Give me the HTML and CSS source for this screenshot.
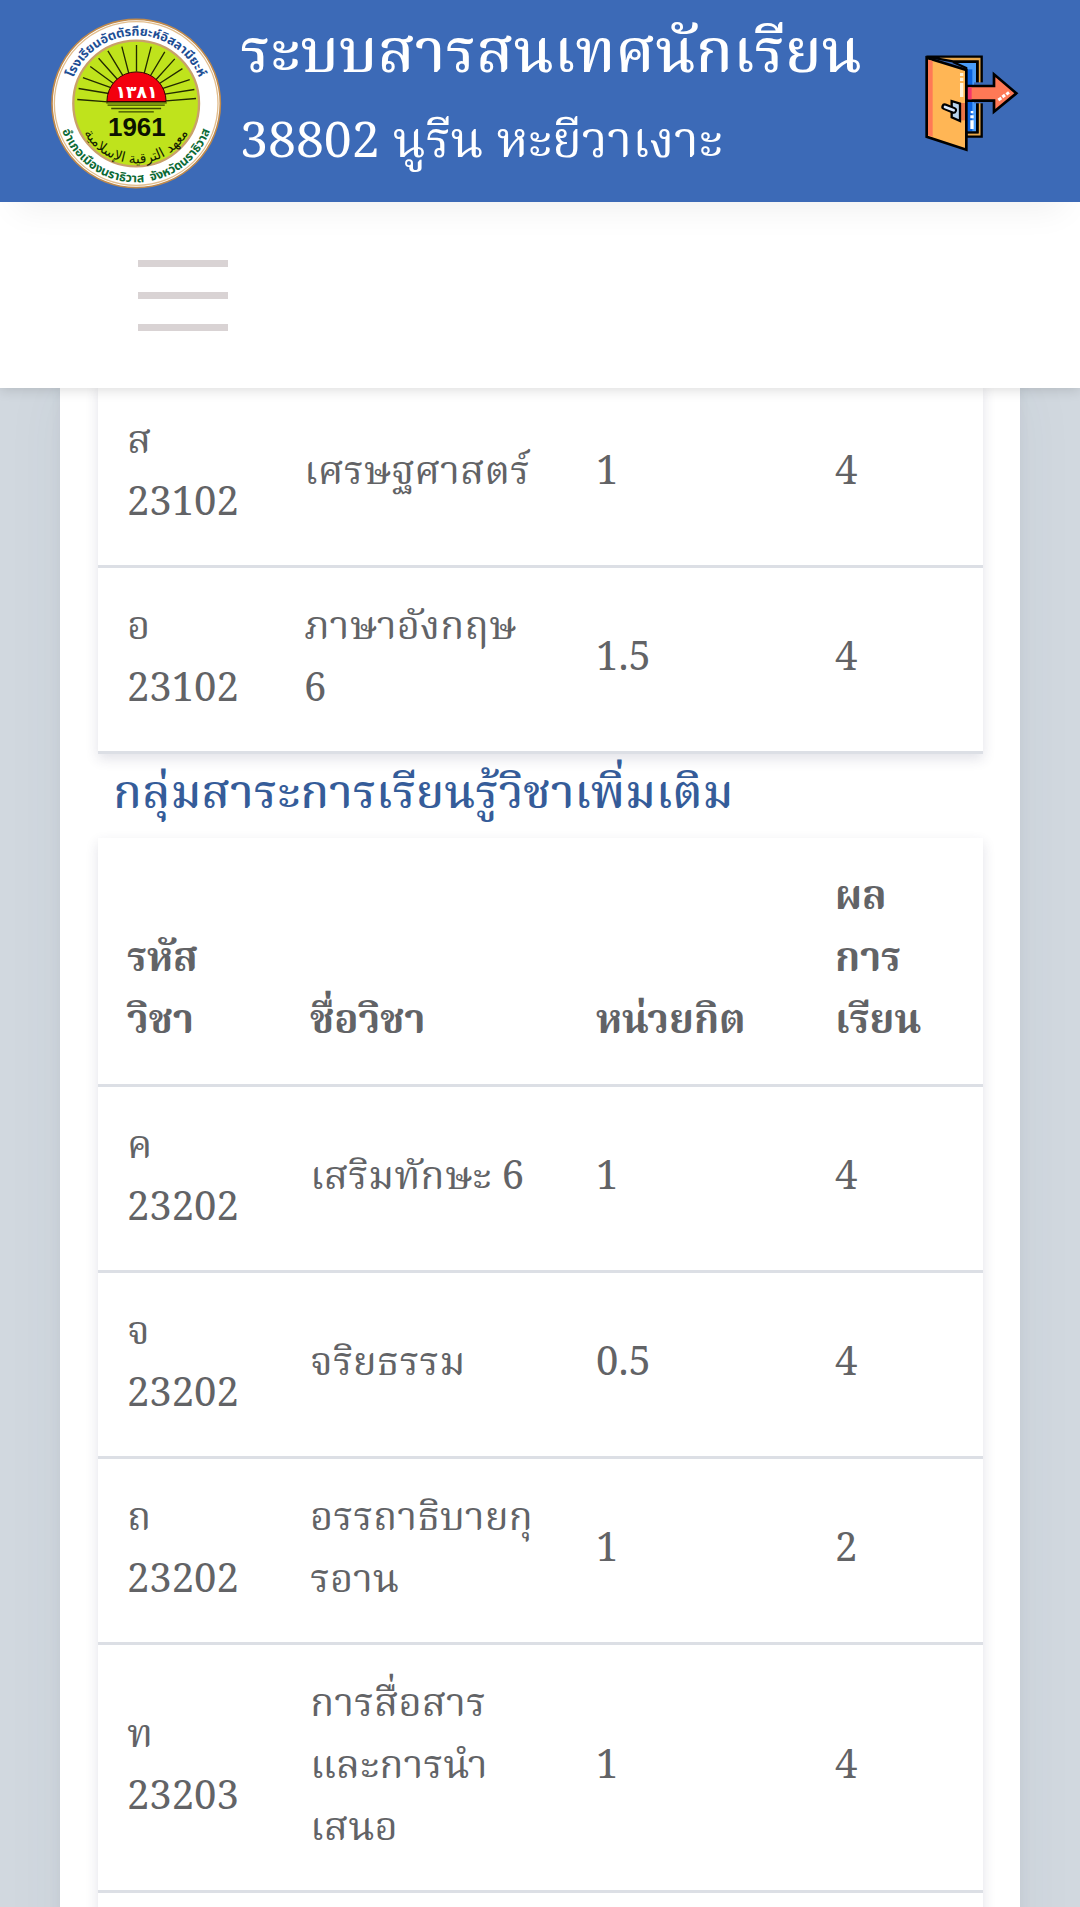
FILE: index.html
```html
<!DOCTYPE html>
<html lang="th">
<head>
    <meta charset="UTF-8">
    <meta name="viewport" content="width=device-width, initial-scale=1.0">
    <title>ระบบสารสนเทศนักเรียน</title>
    <link rel="stylesheet" href="styles.css">
</head>
<body>
    <header class="header">
        <svg class="logo" viewBox="33 53 512 514" aria-hidden="true">
            <defs>
                <path id="ringTop" d="M 84 310 A 204 204 0 0 1 492 310"/>
                <path id="ringBottom" d="M 51 310 A 237 237 0 0 0 525 310"/>
                <path id="ringInner" d="M 108 310 A 180 180 0 0 0 468 310"/>
            </defs>
            <circle cx="288" cy="310" r="253" fill="#fff" stroke="#c08a4c" stroke-width="5"/>
            <circle cx="288" cy="310" r="246" fill="#fff" stroke="#e2bd8c" stroke-width="4"/>
            <circle cx="288" cy="310" r="189" fill="#bfe31c" stroke="#c9a06a" stroke-width="7"/>
            <g stroke="#222a00" stroke-width="4">
                <path d="M289 134V214M245 139L266 220M203 152L248 226M175 174L234 240M150 199L220 250M128 232L212 262M115 265L206 280M111 298L203 305"/>
                <path d="M333 139L312 220M374 155L330 228M404 176L346 240M427 205L358 250M449 238L366 265M463 268L374 282M468 295L378 302"/>
            </g>
            <path d="M200 304A89 89 0 0 1 378 304Z" fill="#f3000e" stroke="#300" stroke-width="3"/>
            <path d="M198 308H380M202 315H374M213 325H363M235 335H341" stroke="#3b4a00" stroke-width="4"/>
            <text x="289" y="292" class="logo-red">١٣٨١</text>
            <text x="290" y="408" class="logo-year">1961</text>
            <text class="logo-name"><textPath href="#ringTop" startOffset="50%">โรงเรียนอัตตัรกียะห์อิสลามียะห์</textPath></text>
            <text class="logo-place"><textPath href="#ringBottom" startOffset="50%">อำเภอเมืองนราธิวาส&#160; จังหวัดนราธิวาส</textPath></text>
            <text class="logo-arabic"><textPath href="#ringInner" startOffset="50%">معهد الترقية الإسلامية</textPath></text>
        </svg>
        <div class="header-text">
            <h1>ระบบสารสนเทศนักเรียน</h1>
            <p>38802 นูรีน หะยีวาเงาะ</p>
        </div>
        <a class="logout" href="#" aria-label="ออกจากระบบ">
            <svg viewBox="910 160 291 300" aria-hidden="true">
                <path d="M920 171H1086V411H1040V398H1074V185H1000Z" fill="#e9a84c" stroke="#000" stroke-width="7"/>
                <path d="M1000 187H1072V398H1040V205Z" fill="#4a9cf8" stroke="#000" stroke-width="6"/>
                <path d="M1042 209H1058V394H1042Z" fill="#0a62e0"/>
                <path d="M1063 248H1092V311H1063Z" fill="#3c6ab7"/>
                <path d="M1042 259H1123V224L1190 281L1123 336V303H1042Z" fill="#ff7956" stroke="#000" stroke-width="8"/>
                <path d="M1043 263H1056V299H1043Z" fill="#f4376b"/>
                <path d="M921 174L1040 211V450L921 411Z" fill="#ffb655" stroke="#000" stroke-width="8"/>
                <path d="M925 180L939 184V411L925 407Z" fill="#ff7956"/>
                <path d="M1024 310H1036V362H1024Z" fill="#e87346"/>
                <path d="M1021 250H1031V292H1021ZM1021 234H1031V244H1021ZM1021 220H1031V229H1021Z" fill="#fff3dc"/>
                <path d="M1052 362H1062V388H1052ZM1052 347H1062V356H1052ZM1053 334H1061V341H1053Z" fill="#fff"/>
                <path d="M1136 301L1145 295M1148 292L1156 286M1160 284L1168 278" stroke="#fff" stroke-width="9"/>
                <path d="M996 304L1021 312V364L996 353V340L1004 335L996 325Z" fill="#b9d4ee" stroke="#000" stroke-width="7"/>
                <path d="M975 321L1002 332" stroke="#000" stroke-width="20" stroke-linecap="round"/>
                <path d="M976 322L1002 332" stroke="#dcebff" stroke-width="8" stroke-linecap="round"/>
            </svg>
        </a>
    </header>
    <nav class="navbar">
        <button type="button" class="menu-btn" aria-label="เมนู">
            <span></span>
            <span></span>
            <span></span>
        </button>
    </nav>
    <main class="content">
        <div class="card">
            <table class="grade-table">
                <colgroup>
                    <col class="col-code">
                    <col>
                    <col class="col-unit">
                    <col class="col-grade">
                </colgroup>
                <tbody>
                    <tr>
                        <td>ส<br>23102</td>
                        <td>เศรษฐศาสตร์</td>
                        <td>1</td>
                        <td>4</td>
                    </tr>
                    <tr>
                        <td>อ<br>23102</td>
                        <td>ภาษาอังกฤษ<br>6</td>
                        <td>1.5</td>
                        <td>4</td>
                    </tr>
                </tbody>
            </table>
            <h2 class="group-title">กลุ่มสาระการเรียนรู้วิชาเพิ่มเติม</h2>
            <table class="grade-table">
                <colgroup>
                    <col class="col-code-wide">
                    <col>
                    <col class="col-unit">
                    <col class="col-grade">
                </colgroup>
                <thead>
                    <tr>
                        <th>รหัส<br>วิชา</th>
                        <th>ชื่อวิชา</th>
                        <th>หน่วยกิต</th>
                        <th>ผล<br>การ<br>เรียน</th>
                    </tr>
                </thead>
                <tbody>
                    <tr>
                        <td>ค<br>23202</td>
                        <td>เสริมทักษะ 6</td>
                        <td>1</td>
                        <td>4</td>
                    </tr>
                    <tr>
                        <td>จ<br>23202</td>
                        <td>จริยธรรม</td>
                        <td>0.5</td>
                        <td>4</td>
                    </tr>
                    <tr>
                        <td>ถ<br>23202</td>
                        <td>อรรถาธิบายกุ<br>รอาน</td>
                        <td>1</td>
                        <td>2</td>
                    </tr>
                    <tr>
                        <td>ท<br>23203</td>
                        <td>การสื่อสาร<br>และการนำ<br>เสนอ</td>
                        <td>1</td>
                        <td>4</td>
                    </tr>
                    <tr>
                        <td></td>
                        <td></td>
                        <td></td>
                        <td></td>
                    </tr>
                </tbody>
            </table>
        </div>
    </main>
</body>
</html>
```
FILE: styles.css
```css
* {
    box-sizing: border-box;
}
body {
    font-family: 'Noto Serif', 'Noto Serif Thai', 'DejaVu Serif', serif;
    margin: 0;
    height: 100vh;
    display: flex;
    flex-direction: column;
    background-color: #d1d8df;
    color: #626366;
    font-size: 40px;
    line-height: 62px;
}
.header {
    position: relative;
    z-index: 2;
    display: flex;
    align-items: center;
    flex-shrink: 0;
    height: 202px;
    padding: 4px 60px 0 51px;
    background-color: #3c6ab7;
    color: #fff;
    box-shadow: 0 24px 32px -16px rgba(0, 0, 0, 0.06);
}
.logo {
    width: 171px;
    height: 171px;
    flex-shrink: 0;
}
.logo text {
    text-anchor: middle;
}
.logo-red {
    font-family: 'DejaVu Sans', sans-serif;
    font-size: 52px;
    font-weight: bold;
    fill: #fff;
}
.logo-year {
    font-family: 'Liberation Sans Narrow', 'Liberation Sans', sans-serif;
    font-size: 78px;
    font-weight: bold;
    fill: #0c1200;
}
.logo-name {
    font-family: 'Noto Sans Thai', 'Noto Sans', sans-serif;
    font-size: 38px;
    font-weight: bold;
    fill: #1c4d94;
}
.logo-place {
    font-family: 'Noto Sans Thai', 'Noto Sans', sans-serif;
    font-size: 37px;
    font-weight: bold;
    fill: #0c6a35;
}
.logo-arabic {
    font-family: 'DejaVu Sans', sans-serif;
    font-size: 42px;
    fill: #141c00;
}
.header-text {
    flex: 1;
    padding: 0 0 20px 18px;
}
.header-text h1 {
    margin: 0;
    font-size: 61px;
    font-weight: 500;
    line-height: 90px;
}
.header-text p {
    margin: 0;
    font-size: 50px;
    line-height: 88px;
}
.logout {
    display: block;
    width: 97px;
    height: 100px;
}
.logout svg {
    display: block;
    width: 100%;
    height: 100%;
}
.navbar {
    position: relative;
    z-index: 1;
    display: flex;
    align-items: center;
    flex-shrink: 0;
    height: 186px;
    padding: 0 138px;
    background-color: #fff;
    box-shadow: 0 2px 12px rgba(0, 0, 0, 0.14);
}
.menu-btn {
    display: flex;
    flex-direction: column;
    gap: 25px;
    width: 90px;
    padding: 0;
    border: none;
    background: none;
    cursor: pointer;
}
.menu-btn span {
    height: 7px;
    background-color: #d9d3d4;
}
.content {
    flex: 1;
    min-height: 0;
    overflow-y: auto;
    scrollbar-width: none;
    padding: 0 60px;
    margin-top: -6px;
}
.card {
    padding: 0 37px 60px 38px;
    background-color: #fff;
    box-shadow: 0 0 60px rgba(60, 75, 105, 0.05), 0 0 12px rgba(60, 75, 105, 0.08);
}
.grade-table {
    width: 100%;
    table-layout: fixed;
    border-collapse: separate;
    border-spacing: 0;
    background-color: #fff;
    box-shadow: 0 5px 12px rgba(50, 50, 93, 0.14);
}
.grade-table th,
.grade-table td {
    padding: 25px 0 34px 29px;
    border-bottom: 3px solid #dcdfe5;
    text-align: left;
    vertical-align: middle;
}
.grade-table th {
    padding-bottom: 35px;
    vertical-align: bottom;
    font-weight: bold;
}
.col-code {
    width: 177px;
}
.col-code-wide {
    width: 183px;
}
.col-unit {
    width: 27%;
}
.col-grade {
    width: 20%;
}
.group-title {
    margin: 0;
    padding: 0 15px 12px;
    color: #355c99;
    font-size: 47px;
    font-weight: 500;
    line-height: 72px;
}
```
